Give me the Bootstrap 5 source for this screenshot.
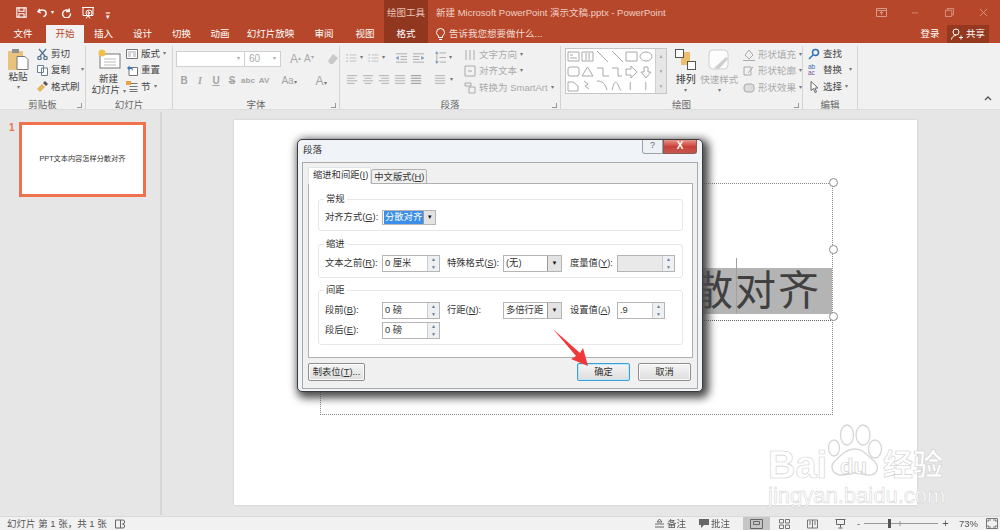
<!DOCTYPE html>
<html lang="zh-CN">
<head>
<meta charset="UTF-8">
<title>新建 Microsoft PowerPoint 演示文稿.pptx - PowerPoint</title>
<link rel="stylesheet" href="https://cdn.jsdelivr.net/npm/bootstrap@5.3.0/dist/css/bootstrap.min.css">
<style>
html,body{height:530px;overflow:hidden}
body{width:1000px;background:#e6e6e6;font:9.5px/1.2 "Liberation Sans","Noto Sans CJK SC",sans-serif;color:#444;position:relative;filter:blur(.3px)}
svg{display:block;flex:none}
.w46{width:46px}.w38{width:38px}.w39{width:39px}.w63{width:63px}.w44{width:44px}.w493{width:493px}.w18{width:18px}
.l3{margin-left:3px}.l5{margin-left:5px}.l7{margin-left:7px}.l9{margin-left:9px}.l10{margin-left:10px}.l11{margin-left:11px}.l24{margin-left:24px}.l25{margin-left:25px}.l26{margin-left:26px}
.ppt-top{background:#b7472a;color:#fff;height:43px}
.ppt-title{height:25px}
.ppt-qat{padding-left:16px;width:384px}
.ppt-ctx{width:44px;background:#92371f;color:#e8c3b8;height:25px}
.ppt-doc{margin-left:8px;font-size:9.5px;color:#eecfc6;width:433px}
.ppt-win{padding-left:7px}
.qat-more{font-size:7px;line-height:7px}
.ppt-tabs{height:18px}
.ppt-tab{height:18px;display:flex;align-items:center;justify-content:center;font-size:9.5px;color:#fff;white-space:nowrap;flex:none}
.ppt-tab.on{background:#f1f1f1;color:#b7472a}
.ppt-tab.ctx{background:#92371f}
.ppt-tab.tell{color:#f3ddd6;justify-content:flex-start}
.ppt-share{background:#94391f;height:18px;width:42px;margin:0 12px 0 8px;gap:3px}
.ppt-ribbon{height:67px;background:#f1f1f1;border-bottom:1px solid #dcdcdc;color:#444;position:relative}
.rb-group{position:relative;height:63px;margin-top:3px;border-right:1px solid #d4d4d4;flex:none}
.grp-clip{width:86px;padding:1px 0 0 8px;gap:9px}
.grp-slide{width:87px;padding:1px 0 0 8px;gap:3px}
.grp-font{width:167px;padding:5px 0 0 3px}
.grp-para{width:221px;padding:5px 0 0 6px}
.grp-draw{width:242px;padding:2px 0 0 4px}
.grp-edit{width:55px;padding:1px 0 0 5px}
.rb-label{position:absolute;left:0;right:0;bottom:-1px;text-align:center;font-size:9.5px;color:#666}
.rb-launch{position:absolute;right:3px;bottom:1px;width:5px;height:5px;border:1px solid #999;border-width:0 1px 1px 0}
.rb-big{display:flex;flex-direction:column;align-items:center;text-align:center;line-height:11px;white-space:nowrap}
.big-paste{width:20px;padding-top:1px}
.big-new{width:29px;padding-top:2px}
.big-arr{width:28px;padding-top:1px;margin-left:5px;color:#333}
.big-arr span:first-of-type{font-size:10px}
.big-quick{width:40px;padding-top:1px}
.rb-stack{display:flex;flex-direction:column;gap:3.5px}
.stack-para{margin:-3px 0 0 2px}
.stack-draw{margin:0 0 0 4px;padding-top:0}
.rb-item{display:flex;align-items:center;gap:3px;height:13px;white-space:nowrap}
.rb-off{color:#aaa}
.rb-caret{color:#777;font-size:6px}
.rb-box{height:16px;background:#fff;border:1px solid #cfcfcf}
.box-font{width:69px}
.box-size{width:36px;border-left:0;font-size:10px;padding-left:4px}
.rb-gallery{width:102px;height:46px;background:#fff;border:1px solid #c6c6c6}
.rb-scroll{width:11px;background:#e6e6e6;border-left:1px solid #d0d0d0;color:#aaa;font-size:5px}
.rb-plain{background:transparent;border:0;text-align:center;font-size:6px}
.grow-a{font-size:12px;margin-left:9px}
.grow-b{font-size:10px;margin-left:3px}
.grow-a sup,.grow-b sup{font-size:6px}
.clear-fmt{margin-left:13px}
.rb-letters{color:#a5a5a5;font-weight:700;font-size:10px;margin-top:7px}
.rb-letters span{text-align:center;flex:none;width:16px}
.rb-letters .ser{font-style:italic;font-family:"Liberation Serif",serif}
.rb-letters .tiny{font-size:8px}
.rb-letters .rb-caret{width:auto;font-size:6px}
.rb-letters .aa{width:34px;font-weight:400}
.rb-letters .big-a{width:30px;font-size:12px;font-weight:400}
.para-col{width:116px}
.para-row2{margin-top:10px;gap:4px}
.fill-gray{color:#888}
.ab-ac{font-size:6.5px;line-height:6px;color:#3d6eaf;width:12px}
.ab-ac span{color:#7a4fa3}
.rb-collapse{margin:auto 8px 8px auto}
.ppt-main{height:403px;margin-top:2px;background:#e6e6e6;position:relative}
.ppt-side{width:162px;border-right:2px solid #d6d6d6;height:403px;padding:10px 0 0 9px}
.thumb-no{color:#e9754f;font-size:10px;font-weight:700;width:10px}
.thumb{width:127px;height:75px;background:#fff;border:3px solid #f0714e;font-size:7.2px;color:#333;white-space:nowrap}
.slide-area{position:relative;flex:1}
.slide-page{position:absolute;left:72px;top:8px;width:683px;height:385px;background:#fff;box-shadow:0 0 2px #c4c4c4}
.tbox,.tframe{position:absolute;left:86px;top:63px;width:513px;height:232px}
.tbox{border:1px dotted #888}
.tsel{position:absolute;left:340px;top:85px;right:1px;height:46px;background:#b4b4b4;color:#404040;font-size:41px;line-height:46px;text-align:right;padding-right:11px;letter-spacing:2px;white-space:nowrap;overflow:hidden}
.tcursor{position:absolute;left:416px;top:75px;height:56px;width:1px;background:#a0a0a0}
.tline{position:absolute;left:380px;top:137px;right:0;border-top:1px dotted #666}
.handle{position:absolute;right:-5px;width:9px;height:9px;border-radius:50%;background:#fff;border:1px solid #8a8a8a}
.h1{top:-5px}.h2{top:62px}.h3{top:129px}
.blob{position:absolute;left:320px;top:28px;width:34px;height:34px;border-radius:50%;background:#ececec}
.wm{position:absolute;left:767px;top:425px;width:180px;height:82px;color:#fff;pointer-events:none}
.wm-paw{position:absolute;left:61px;top:-2px}
.wm-big{position:absolute;left:1px;top:25px;font-size:38px;font-weight:700;-webkit-text-stroke:.6px #d0d0d0;line-height:30px;white-space:nowrap}
.wm-du{position:absolute;left:73px;top:27px;font-size:22px;font-weight:700;-webkit-text-stroke:.6px #c8c8c8;line-height:30px;white-space:nowrap}
.wm-cn{position:absolute;left:116px;top:25px;font-size:30px;font-weight:700;-webkit-text-stroke:.6px #d0d0d0;line-height:30px;white-space:nowrap}
.wm-sub{position:absolute;left:1px;top:60px;font-size:22px;-webkit-text-stroke:.5px #cfcfcf;line-height:22px;white-space:nowrap}
.ppt-status{position:absolute;left:0;right:0;top:516px;height:14px;background:#f1f1f1;border-top:1px solid #dadada;font-size:9.5px;color:#555;white-space:nowrap}
.ppt-status>*{flex:none}
.st-count{margin-left:7px;width:108px}
.st-notes{margin-left:529px;gap:3px}
.st-comments{margin-left:13px;gap:2px}
.st-views{margin-left:13px;gap:1px}
.st-zoom{margin-left:3px;width:91px;color:#555}
.st-plus{font-size:11px}
.st-pct{margin-left:11px}
.st-view{width:27px;height:14px}
.st-view.on{background:#c6c6c6}
.para-dlg{position:absolute;left:297px;top:139px;width:406px;height:253px;background:#f0f4f9;border:1px solid #3c3c3c;border-radius:5px;padding:22px 4px 4px;box-shadow:3px 3px 9px 3px #4a4a4a;font-size:9.3px;color:#333}
.para-cap{position:absolute;left:5px;top:4px;font-size:9.5px}
.para-ctl{position:absolute;right:5px;top:0}
.para-help{width:21px;height:14px;border:1px solid #9aa4ad;border-top:0;border-radius:0 0 0 3px;background:#eef1f4;color:#667;font-size:9px;text-align:center}
.para-close{width:34px;height:14px;border:1px solid #8c5a52;border-top:0;border-radius:0 0 3px 0;background:linear-gradient(#e8968c,#c9423a 50%,#c4574f);color:#fff;font-weight:700;font-size:10px;line-height:12px;text-align:center}
.para-inner{height:227px;background:#f0f0f0;border:1px solid #a9a9a9;padding:4px 5px 0}
.para-tabs{height:16px;border:0;gap:0;flex-wrap:nowrap}
.para-tabs .nav-link{font-size:9.3px;line-height:12px;padding:1px 2px;color:#333;background:#f0f0f0;border:1px solid #b0b0b0;border-radius:2px 2px 0 0;margin:2px 0 0;height:15px;white-space:nowrap}
.para-tabs .nav-link.active{background:#fff;margin-top:0;height:17px;border-bottom-color:#fff;position:relative;z-index:2;padding-left:4px;padding-right:2px;color:#333}
.para-body{width:385px;height:175px;background:#fff;border:1px solid #b0b0b0;padding:15px 9px 0 9px}
.para-set{position:relative;border:1px solid #e7e7e7;border-radius:3px;padding:0 6px}
.para-set>span{position:absolute;left:5px;top:-7px;background:#fff;padding:0 2px;line-height:12px}
.set-a{height:32px;padding-top:11px}
.set-b{height:34px;margin-top:13px;padding-top:10px}
.set-c{height:55px;margin-top:12px;padding-top:11px}
.para-line{display:flex;align-items:center;white-space:nowrap}
.para-line.next{margin-top:3px}
.para-lb1{width:57px;flex:none}
.para-lb2{width:56px;margin-left:7px;flex:none}
.para-lb3{width:47px;margin-left:8px;flex:none}
.para-in{width:58px;height:17px;border:1px solid #b5b5b5;background:#fff;padding-left:2px;display:flex;align-items:center;position:relative;flex:none}
.para-in.dim{background:#e9e9e9;color:#888}
.para-in.short{width:48px}
.para-spin{position:absolute;right:0;top:0;bottom:0;width:12px;background:#eef1f4;border-left:1px solid #ccc;color:#6c7c96;font-size:5px;line-height:7.5px;text-align:center}
.para-sel{height:17px;width:59px;border:1px solid #b5b5b5;background:#fff;padding-left:2px;display:flex;align-items:center;justify-content:space-between;flex:none}
.para-sel.first{width:54px;height:15px;margin-top:-1px;padding-left:1px}
.para-arr{width:14px;height:15px;background:#e3e3e3;border-left:1px solid #999;color:#111;font-size:6px;line-height:15px;text-align:center}
.first .para-arr{height:13px;line-height:13px}
.para-hi{background:#3b8fe8;color:#fff;height:13px;padding:0 1px;line-height:13px}
.para-foot{margin-top:5px}
.para-btn{height:18px;font-size:9.3px;line-height:14px;padding:0;border:1px solid #8e8e8e;border-radius:2px;background:linear-gradient(#f5f5f5,#ddd);color:#333;box-shadow:inset 0 0 0 1px #fbfbfb}
.para-btn.ok{border-color:#3e9fd3;box-shadow:inset 0 0 0 1px #bfe6f8}
.btn-tabs{width:57px}
.btn-ok{width:53px;margin-left:212px}
.btn-no{width:53px;margin-left:8px}
.red-arrow{position:absolute;left:550px;top:327px}
</style>
</head>
<body>
<svg width="0" height="0" class="position-absolute">
  <symbol id="lines" viewBox="0 0 14 12"><path d="M1 1.500h12M1 4.500h9M1 7.500h12M1 10.500h9" stroke="currentColor" fill="none"/></symbol>
  <symbol id="center" viewBox="0 0 14 12"><path d="M1 1.500h12M3 4.500h8M1 7.500h12M3 10.500h8" stroke="currentColor" fill="none"/></symbol>
  <symbol id="right" viewBox="0 0 14 12"><path d="M1 1.500h12M4 4.500h9M1 7.500h12M4 10.500h9" stroke="currentColor" fill="none"/></symbol>
  <symbol id="just" viewBox="0 0 14 12"><path d="M1 1.500h12M1 4.500h12M1 7.500h12M1 10.500h12" stroke="currentColor" fill="none"/></symbol>
  <symbol id="list" viewBox="0 0 18 14"><path d="M1 2h2M1 7h2M1 12h2" stroke="currentColor" stroke-width="2"/><path d="M6 2h11M6 7h11M6 12h11" stroke="currentColor" fill="none"/></symbol>
  <symbol id="indent" viewBox="0 0 14 12"><path d="M1 1.500h12M6 4.500h7M6 7.500h7M1 10.500h12M1 6h3" stroke="currentColor" fill="none"/><path d="M4 3.500v5L1 6z" fill="#7f9dc4"/></symbol>
  <symbol id="outdent" viewBox="0 0 14 12"><path d="M1 1.500h12M1 4.500h7M1 7.500h7M1 10.500h12M10 6h3" stroke="currentColor" fill="none"/><path d="M10 3.500v5L13 6z" fill="#7f9dc4"/></symbol>
  <symbol id="spacing" viewBox="0 0 12 14"><path d="M5 2h7M5 7h7M5 12h7M2 1v12" stroke="currentColor" fill="none"/><path d="m0 3 2-3 2 3zM0 11l2 3 2-3z" fill="#7f9dc4"/></symbol>
</svg>

<div class="ppt-top">
  <div class="ppt-title d-flex align-items-center">
    <div class="ppt-qat d-flex align-items-center">
      <svg width="11" height="11" viewBox="0 0 13 13" fill="none" stroke="#fff" stroke-width="1.300"><path d="M1 1h11v11H1z"/><path d="M3.500 1v4h6V1M3.500 12V8h6v4"/></svg>
      <svg class="l10" width="11" height="11" viewBox="0 0 12 12" fill="none" stroke="#fff" stroke-width="1.500"><path d="M3 2 1 5l3 1.500M1.500 5C5 2 10 3 10 7c0 2-1.500 3-3 3.500"/></svg>
      <span class="rb-caret text-white l3">▾</span>
      <svg class="l7" width="11" height="11" viewBox="0 0 12 12" fill="none" stroke="#fff" stroke-width="1.500"><path d="M9 1.500v3.500H5.500M9 4.500A4.300 4.300 0 1 0 10.300 7"/></svg>
      <svg class="l9" width="14" height="14" viewBox="0 0 14 14" fill="none" stroke="#fff"><path d="M1 1.500h12M2 1.500v8h10v-8M7 9.500l-2 3M7 9.500l2 3"/><circle cx="8" cy="7" r="3"/><path d="m7.200 5.500 2 1.500-2 1.500z"/></svg>
      <span class="l11 qat-more">‗<br>▾</span>
    </div>
    <div class="ppt-ctx d-flex align-items-center justify-content-center">绘图工具</div>
    <div class="ppt-doc">新建 Microsoft PowerPoint 演示文稿.pptx - PowerPoint</div>
    <div class="ppt-win d-flex align-items-center">
      <svg width="11" height="9" viewBox="0 0 11 9" fill="none" stroke="#d99a89"><path d="M.5.500h10v8H.5zM.5 2.500h10M5.500 4v3M4 5l1.500-1.500L7 5"/></svg>
      <svg class="l24" width="8" height="9" viewBox="0 0 10 9" stroke="#d99a89"><path d="M1 5h8"/></svg>
      <svg class="l26" width="9" height="9" viewBox="0 0 10 10" fill="none" stroke="#d99a89"><path d="M.5 2.500h7v7h-7zM2.500 2.500v-2h7v7h-2"/></svg>
      <svg class="l25" width="9" height="9" viewBox="0 0 10 10" stroke="#d99a89"><path d="m1 1 8 8M9 1 1 9"/></svg>
    </div>
  </div>
  <div class="ppt-tabs d-flex">
    <div class="ppt-tab w46">文件</div>
    <div class="ppt-tab on w38">开始</div>
    <div class="ppt-tab w39">插入</div>
    <div class="ppt-tab w39">设计</div>
    <div class="ppt-tab w39">切换</div>
    <div class="ppt-tab w38">动画</div>
    <div class="ppt-tab w63">幻灯片放映</div>
    <div class="ppt-tab w44">审阅</div>
    <div class="ppt-tab w38">视图</div>
    <div class="ppt-tab ctx w44">格式</div>
    <div class="ppt-tab tell gap-1 ps-2 w493">
      <svg width="9" height="12" viewBox="0 0 9 12" fill="none" stroke="#fff"><path d="M2.500 8C1 6.500.5 5.500.5 4.500a4 4 0 0 1 8 0c0 1-.5 2-2 3.500v1.500h-4zM3 11.500h3"/></svg>
      告诉我您想要做什么...
    </div>
    <div class="ppt-tab w18">登录</div>
    <div class="ppt-share ppt-tab">
      <svg width="12" height="12" viewBox="0 0 12 12" fill="none" stroke="#fff"><circle cx="5" cy="4" r="3"/><path d="M.5 11.500c.5-3 2-4 4.500-4M8 9.500h4M10 7.500v4"/></svg>共享
    </div>
  </div>
</div>

<div class="ppt-ribbon d-flex">
  <!-- 剪贴板 -->
  <div class="rb-group grp-clip d-flex">
    <div class="rb-big big-paste">
      <svg width="21" height="23" viewBox="0 0 21 23"><rect x="0" y="3" width="15" height="19" rx="1" fill="#e9c37d"/><rect x="4" y="1" width="7" height="4" fill="#8f8f8f"/><path d="M9 8.500h8l3 3v10H9z" fill="#fff" stroke="#777"/></svg>
      <span>粘贴</span><span class="rb-caret">▾</span>
    </div>
    <div class="rb-stack">
      <div class="rb-item"><svg width="11" height="12" viewBox="0 0 11 12" fill="none" stroke="#55708f" stroke-width="1.200"><path d="M2 1 8 8M9 1 3 8"/><circle cx="2.500" cy="10" r="1.700"/><circle cx="8.500" cy="10" r="1.700"/></svg>剪切</div>
      <div class="rb-item"><svg width="11" height="12" viewBox="0 0 11 12" fill="#fff" stroke="#6d7f93"><path d="M.5 1.500h6v7h-6zM4.500 4h6v7.500h-6z"/></svg>复制<span class="rb-caret ms-2">▾</span></div>
      <div class="rb-item"><svg width="11" height="11" viewBox="0 0 11 11"><path d="m0 8 5-5 3 3-5 5z" fill="#e4b45c"/><path d="m6 2 2-2 3 3-2 2z" fill="#555"/></svg>格式刷</div>
    </div>
    <div class="rb-label">剪贴板</div><div class="rb-launch"></div>
  </div>
  <!-- 幻灯片 -->
  <div class="rb-group grp-slide d-flex">
    <div class="rb-big big-new">
      <svg width="24" height="20" viewBox="0 0 24 20"><rect x="3" y="5" width="20" height="14" fill="#fff" stroke="#777"/><path d="M7 10h12M7 13h12M7 16h12" stroke="#bbb"/><circle cx="5" cy="4" r="3.500" fill="#f0c04e"/></svg>
      <span class="mt-1">新建<br>幻灯片 <span class="rb-caret">▾</span></span>
    </div>
    <div class="rb-stack">
      <div class="rb-item"><svg width="12" height="10" viewBox="0 0 12 10" fill="#fff" stroke="#777"><path d="M.5.500h11v9H.5z"/><path d="M2 3h8M2 5h3M7 5h3M2 7h3M7 7h3" stroke="#aaa"/></svg>版式<span class="rb-caret">▾</span></div>
      <div class="rb-item"><svg width="12" height="11" viewBox="0 0 12 11"><path d="M3 2.500h8.500v8H3z" fill="#fff" stroke="#777"/><path d="M1 3 3.500.5V2C7 2 7 4 7 6 6 4 5 4 3.500 4v1.500z" fill="#3d79b8"/></svg>重置</div>
      <div class="rb-item"><svg width="12" height="11" viewBox="0 0 12 11"><path d="M3.500 2.500h8M3.500 5.500h8M3.500 8.500h8M3.500 10.500h8" stroke="#777"/><path d="M0 0h5v4H0z" fill="#e9a341"/></svg>节<span class="rb-caret">▾</span></div>
    </div>
    <div class="rb-label">幻灯片</div>
  </div>
  <!-- 字体 -->
  <div class="rb-group grp-font">
    <div class="d-flex align-items-center">
      <div class="rb-box box-font d-flex justify-content-end align-items-center"><span class="rb-scroll rb-plain rb-caret">▾</span></div>
      <div class="rb-box box-size d-flex justify-content-between align-items-center rb-off">60<span class="rb-scroll rb-plain rb-caret">▾</span></div>
      <span class="rb-off grow-a">A<sup>▴</sup></span>
      <span class="rb-off grow-b">A<sup>▾</sup></span>
      <svg class="clear-fmt" width="12" height="12" viewBox="0 0 12 12"><path d="m1 8 5-7 5 4-5 6H3z" fill="#c9c9c9"/></svg>
    </div>
    <div class="d-flex align-items-center rb-letters">
      <span>B</span><span class="ser">I</span><span class="text-decoration-underline">U</span><span class="text-decoration-line-through">S</span>
      <span class="tiny">abc</span><span class="tiny">AV</span>
      <span class="aa">Aa<span class="rb-caret">▾</span></span>
      <span class="big-a">A<span class="rb-caret">▾</span></span>
    </div>
    <div class="rb-label">字体</div><div class="rb-launch"></div>
  </div>
  <!-- 段落 -->
  <div class="rb-group grp-para rb-off d-flex">
    <div class="para-col">
      <div class="d-flex align-items-center">
        <svg width="11" height="12"><use href="#list"/></svg><span class="rb-caret l3">▾</span>
        <svg class="l5" width="11" height="12"><use href="#list"/></svg><span class="rb-caret l3">▾</span>
        <svg class="l10" width="13" height="12"><use href="#indent"/></svg><svg class="ms-1" width="13" height="12"><use href="#outdent"/></svg>
        <svg class="l10" width="11" height="13"><use href="#spacing"/></svg><span class="rb-caret l3">▾</span>
      </div>
      <div class="d-flex align-items-center para-row2">
        <svg width="12" height="11"><use href="#lines"/></svg><svg width="12" height="11"><use href="#center"/></svg><svg width="12" height="11"><use href="#right"/></svg><svg width="12" height="11"><use href="#just"/></svg>
        <svg class="fill-gray" width="12" height="11"><use href="#just"/></svg>
        <svg class="ms-2" width="12" height="11"><use href="#just"/></svg><span class="rb-caret">▾</span>
      </div>
    </div>
    <div class="rb-stack stack-para">
      <div class="rb-item"><svg width="12" height="12" viewBox="0 0 12 12" stroke="currentColor" fill="none"><path d="M2 1v10M6 1v10M10 1v10"/></svg>文字方向<span class="rb-caret">▾</span></div>
      <div class="rb-item"><svg width="12" height="12" viewBox="0 0 12 12" stroke="currentColor" fill="none"><path d="M1 1h10v10H1zM4 6h4"/></svg>对齐文本<span class="rb-caret">▾</span></div>
      <div class="rb-item"><svg width="12" height="12" viewBox="0 0 12 12" stroke="currentColor" fill="none"><path d="M1 1h6v3H1zM5 5h6v6H5z"/></svg>转换为 SmartArt<span class="rb-caret">▾</span></div>
    </div>
    <div class="rb-label">段落</div><div class="rb-launch"></div>
  </div>
  <!-- 绘图 -->
  <div class="rb-group grp-draw d-flex">
    <div class="rb-gallery d-flex">
      <svg width="89" height="44" viewBox="0 0 89 44" fill="none" stroke="#a8a8a8">
        <path d="M2 3h11v9H2zM4 6h3M4 9h7M16 3h11v9H16zM20 4v7M23 4v7M31 2l11 11M46 2l11 11M60 3h11v9H60z"/>
        <ellipse cx="80" cy="7.500" rx="6" ry="4.500"/>
        <rect x="2" y="18" width="11" height="9" rx="2"/><path d="m16 27 5.500-9 5.500 9zM31 19h6v8h6M46 19h6v8h4M60 20h5v-3l6 6-6 6v-3h-5zM78 18h4v5h3l-5 6-5-6h3z"/>
        <path d="M2 33h5l5 4v5H2zM18 32l4 3-3 2 4 3M31 32c6 0 8 3 10 9M46 41c3-12 5-8 7-3s2 3 2 3M65 33c-2 1 0 3-1 4 1 1-1 3 1 4M79 33c2 1 0 3 1 4-1 1 1 3-1 4"/>
      </svg>
      <div class="rb-scroll d-flex flex-column justify-content-around align-items-center ms-auto"><span>▲</span><span>▼</span><span>▼</span></div>
    </div>
    <div class="rb-big big-arr">
      <svg width="21" height="21" viewBox="0 0 21 21"><rect x="6" y="3" width="9" height="13" fill="#efbe6d"/><rect x=".5" y=".5" width="8" height="8" fill="#fff" stroke="#555"/><rect x="12.500" y="12.500" width="8" height="8" fill="#fff" stroke="#555"/></svg>
      <span class="mt-1">排列</span><span class="rb-caret">▾</span>
    </div>
    <div class="rb-big rb-off big-quick">
      <svg width="24" height="21" viewBox="0 0 24 21"><rect x="2" y="1" width="19" height="19" rx="4" fill="#fdfdfd" stroke="#cfcfcf"/><path d="m7 19 12-11 2 2-9 10z" fill="#cfcfcf"/></svg>
      <span class="mt-1">快速样式</span><span class="rb-caret">▾</span>
    </div>
    <div class="rb-stack rb-off stack-draw">
      <div class="rb-item"><svg width="12" height="12" viewBox="0 0 12 12" stroke="#aaa" fill="none"><path d="m6 1 4 5-4 4-4-4zM0 11.500h12"/></svg>形状填充<span class="rb-caret">▾</span></div>
      <div class="rb-item"><svg width="12" height="12" viewBox="0 0 12 12" stroke="#aaa" fill="none"><path d="M1 2h7v8H1zM5 8l5-6"/></svg>形状轮廓<span class="rb-caret">▾</span></div>
      <div class="rb-item"><svg width="12" height="12" viewBox="0 0 12 12" stroke="#aaa" fill="#ddd"><rect x="1" y="2" width="10" height="8" rx="3"/></svg>形状效果<span class="rb-caret">▾</span></div>
    </div>
    <div class="rb-label">绘图</div><div class="rb-launch"></div>
  </div>
  <!-- 编辑 -->
  <div class="rb-group grp-edit">
    <div class="rb-stack">
      <div class="rb-item"><svg width="12" height="12" viewBox="0 0 12 12" fill="none" stroke="#2f6fb5" stroke-width="1.500"><circle cx="7.500" cy="4.500" r="3"/><path d="m5 7-4 4"/></svg>查找</div>
      <div class="rb-item"><span class="ab-ac">ab<br><span>ac</span></span>替换<span class="rb-caret ms-1">▾</span></div>
      <div class="rb-item"><svg width="12" height="12" viewBox="0 0 12 12" fill="#fff" stroke="#666"><path d="M3 .5v9l2.500-2 1.500 4 1.500-.5-1.500-4h3z"/></svg>选择<span class="rb-caret">▾</span></div>
    </div>
    <div class="rb-label">编辑</div>
  </div>
  <svg class="rb-collapse" width="8" height="5" viewBox="0 0 8 5" fill="none" stroke="#555" stroke-width="1.300"><path d="m1 4 3-3 3 3"/></svg>
</div>

<div class="ppt-main d-flex">
  <div class="ppt-side d-flex flex-shrink-0">
    <div class="thumb-no">1</div>
    <div class="thumb d-flex align-items-center justify-content-center">PPT文本内容怎样分散对齐</div>
  </div>
  <div class="slide-area">
    <div class="slide-page">
      <div class="blob"></div>
      <div class="tbox"></div>
      <div class="tframe">
        <div class="tsel">散对齐</div>
        <div class="tcursor"></div>
        <div class="tline"></div>
        <div class="handle h1"></div>
        <div class="handle h2"></div>
        <div class="handle h3"></div>
      </div>
    </div>
  </div>
</div>

<div class="wm">
  <svg class="wm-paw" width="56" height="58" viewBox="0 0 56 58" fill="#fff" stroke="#d6d6d6" stroke-width="1.300">
    <ellipse cx="19" cy="12" rx="6.500" ry="10"/><ellipse cx="35" cy="12" rx="7" ry="10"/><ellipse cx="6" cy="25" rx="5.500" ry="8"/><ellipse cx="47" cy="26" rx="6.500" ry="9"/>
    <path d="M27 26c8 0 12 6 20 13 5 6 2 14-8 13-5-1-8-2-12-2-5 0-8 2-13 2-10 0-12-8-8-13 7-7 12-13 21-13z"/>
  </svg>
  <span class="wm-big">Bai</span>
  <span class="wm-du">du</span>
  <span class="wm-cn">经验</span>
  <span class="wm-sub">jingyan.baidu.com</span>
</div>

<div class="ppt-status d-flex align-items-center">
  <span class="st-count">幻灯片 第 1 张，共 1 张</span>
  <svg width="11" height="10" viewBox="0 0 11 10" fill="none" stroke="#666"><path d="M.5 1h5v8h-5zM5.500 1c2 0 4 0 4 1v2l-2 1 2 1v2c0 1-2 1-4 1"/></svg>
  <div class="d-flex align-items-center st-notes">
    <svg width="9" height="9" viewBox="0 0 9 9" fill="none" stroke="#666"><path d="M4.500 0 2 3h5zM0 5h9M0 8h9"/></svg>备注
  </div>
  <div class="d-flex align-items-center st-comments">
    <svg width="10" height="9" viewBox="0 0 10 9" fill="#666"><path d="M0 0h10v6H5L2 9V6H0z"/></svg>批注
  </div>
  <div class="d-flex align-items-center st-views">
    <div class="st-view on d-flex align-items-center justify-content-center"><svg width="13" height="10" viewBox="0 0 13 10" fill="none" stroke="#666"><path d="M.5.500h12v9H.5zM3.500 2.500h6v3h-6z"/></svg></div>
    <div class="st-view d-flex align-items-center justify-content-center"><svg width="11" height="10" viewBox="0 0 11 10" fill="none" stroke="#777"><path d="M.5.500h4v3.500h-4zM6.500.500h4v3.500h-4zM.5 6h4v3.500h-4zM6.500 6h4v3.500h-4z"/></svg></div>
    <div class="st-view d-flex align-items-center justify-content-center"><svg width="11" height="10" viewBox="0 0 11 10" fill="none" stroke="#777"><path d="M.5 1h10v8H.5zM5.500 1v8M2 3h2M2 5h2M7 3h2M7 5h2"/></svg></div>
    <div class="st-view d-flex align-items-center justify-content-center"><svg width="11" height="10" viewBox="0 0 11 10" fill="none" stroke="#666"><path d="M.5.500h10M1.500.500v5h8v-5M5.500 5.500v3M3.500 9h4"/></svg></div>
  </div>
  <div class="d-flex align-items-center st-zoom">
    <span>-</span>
    <svg class="mx-1" width="74" height="9" viewBox="0 0 74 9"><path d="M0 4.500h74" stroke="#999"/><path d="M36 2v5" stroke="#999"/><rect x="24" y="0" width="3" height="9" fill="#555"/></svg>
    <span class="st-plus">+</span>
  </div>
  <span class="st-pct">73%</span>
  <svg class="ms-2" width="12" height="11" viewBox="0 0 12 11" fill="none" stroke="#777"><path d="M.5.500h11v10H.5zM2 4V2h3M10 4V2H7M2 7v2h3M10 7v2H7"/></svg>
</div>

<div class="para-dlg">
  <div class="para-cap">段落</div>
  <div class="para-ctl d-flex">
    <div class="para-help">?</div>
    <div class="para-close">X</div>
  </div>
  <div class="para-inner">
    <ul class="nav nav-tabs para-tabs">
      <li class="nav-item"><a class="nav-link active" href="#">缩进和间距(<u>I</u>)</a></li>
      <li class="nav-item"><a class="nav-link" href="#">中文版式(<u>H</u>)</a></li>
    </ul>
    <div class="para-body">
      <div class="para-set set-a">
        <span>常规</span>
        <div class="para-line">
          <div class="para-lb1">对齐方式(<u>G</u>):</div>
          <div class="para-sel first"><span class="para-hi">分散对齐</span><span class="para-arr">▼</span></div>
        </div>
      </div>
      <div class="para-set set-b">
        <span>缩进</span>
        <div class="para-line">
          <div class="para-lb1">文本之前(<u>R</u>):</div>
          <div class="para-in">0 厘米<div class="para-spin">▲<br>▼</div></div>
          <div class="para-lb2">特殊格式(<u>S</u>):</div>
          <div class="para-sel">(无)<span class="para-arr">▼</span></div>
          <div class="para-lb3">度量值(<u>Y</u>):</div>
          <div class="para-in dim"><div class="para-spin">▲<br>▼</div></div>
        </div>
      </div>
      <div class="para-set set-c">
        <span>间距</span>
        <div class="para-line">
          <div class="para-lb1">段前(<u>B</u>):</div>
          <div class="para-in">0 磅<div class="para-spin">▲<br>▼</div></div>
          <div class="para-lb2">行距(<u>N</u>):</div>
          <div class="para-sel">多倍行距<span class="para-arr">▼</span></div>
          <div class="para-lb3">设置值(<u>A</u>)</div>
          <div class="para-in short">.9<div class="para-spin">▲<br>▼</div></div>
        </div>
        <div class="para-line next">
          <div class="para-lb1">段后(<u>E</u>):</div>
          <div class="para-in">0 磅<div class="para-spin">▲<br>▼</div></div>
        </div>
      </div>
    </div>
    <div class="para-foot d-flex">
      <button type="button" class="btn para-btn btn-tabs">制表位(<u>T</u>)...</button>
      <button type="button" class="btn para-btn ok btn-ok">确定</button>
      <button type="button" class="btn para-btn btn-no">取消</button>
    </div>
  </div>
</div>

<svg class="red-arrow" width="42" height="42" viewBox="0 0 42 42"><path d="M3 2 30 26l3-5 5 18-17-7 5-3z" fill="#f0383a"/></svg>

<script src="https://cdn.jsdelivr.net/npm/bootstrap@5.3.0/dist/js/bootstrap.bundle.min.js"></script>
</body>
</html>
